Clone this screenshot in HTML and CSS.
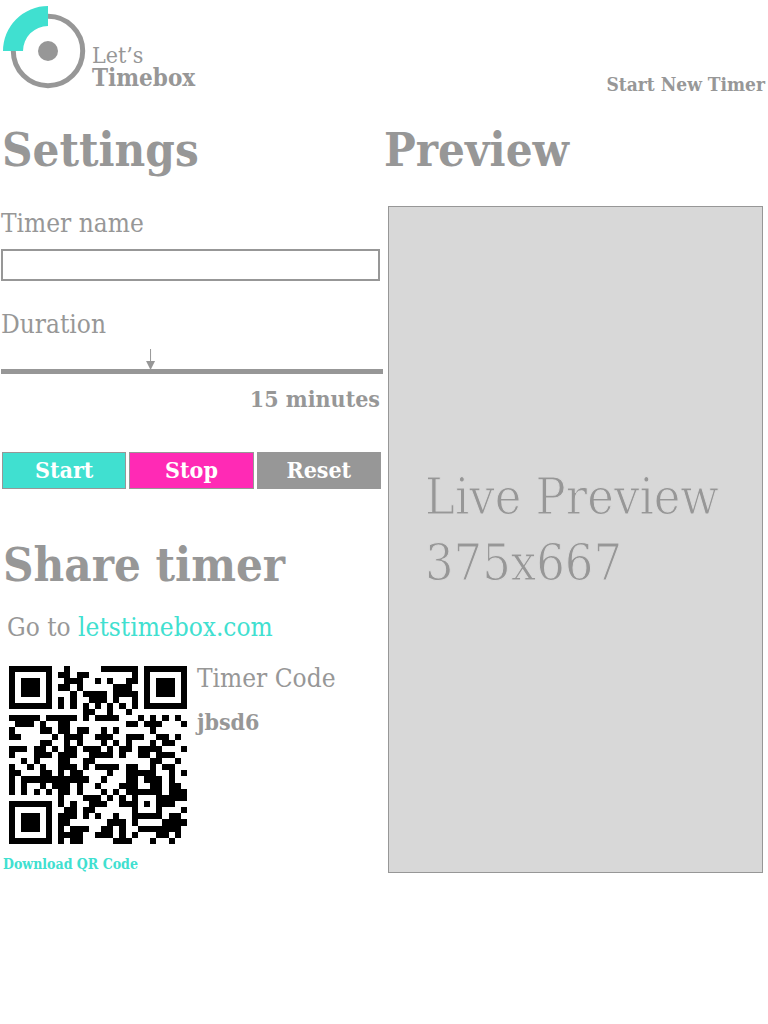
FILE: index.html
```
<!DOCTYPE html>
<html lang="en">
<head>
<meta charset="utf-8">
<meta name="viewport" content="width=device-width, initial-scale=1">
<title>Let's Timebox</title>
<link rel="stylesheet" href="styles.css">
</head>
<body>
<header class="header">
  <a class="brand" href="#">
    <svg class="logo" viewBox="0 0 86 90" aria-hidden="true">
      <circle cx="48" cy="51" r="34.7" fill="none" stroke="#979797" stroke-width="5"/>
      <circle cx="48" cy="51" r="10" fill="#979797"/>
      <path d="M3 51A45 45 0 0 1 48 6V26A25 25 0 0 0 23 51Z" fill="#40e0d0"/>
    </svg>
    <span class="brand-name"><span class="brand-light">Let’s</span><span class="brand-bold">Timebox</span></span>
  </a>
  <a class="new-timer" href="#">Start New Timer</a>
</header>
<main class="columns">
  <div class="controls">
    <section class="settings">
      <h1 class="title">Settings</h1>
      <label class="label" for="name">Timer name</label>
      <input class="text-box" id="name" type="text">
      <label class="label label-duration" for="duration">Duration</label>
      <input class="slider" id="duration" type="range" min="1" max="37" value="15">
      <output class="duration" for="duration">15 minutes</output>
      <div class="actions">
        <button class="button start" type="button">Start</button>
        <button class="button stop" type="button">Stop</button>
        <button class="button reset" type="button">Reset</button>
      </div>
    </section>
    <section class="share">
      <h2 class="title">Share timer</h2>
      <p class="go">Go to <a class="link" href="#">letstimebox.com</a></p>
      <div class="code-row">
        <svg class="qr" viewBox="0 0 29 29" role="img" aria-label="QR code">
          <g id="finder"><path d="M0 0h7v7h-7zM1 1v5h5v-5z" fill-rule="evenodd"/><path d="M2 2h3v3h-3z"/></g>
          <use href="#finder" x="22"/><use href="#finder" y="22"/>
          <path transform="translate(0 .5)" stroke="#000" d="M9 0h1M15 0h6
M8 1h2M11 1h2M20 1h1
M9 2h3M14 2h1M16 2h1M19 2h2
M8 3h2M11 3h1M17 3h3
M10 4h1M12 4h4M17 4h4
M8 5h1M10 5h1M13 5h3M17 5h1M20 5h1
M8 6h1M10 6h1M12 6h1M14 6h1M16 6h1M18 6h1M20 6h1
M12 7h2M16 7h1M19 7h1
M0 8h5M6 8h5M12 8h1M14 8h4M21 8h1M23 8h1M25 8h1M27 8h1
M1 9h3M5 9h1M8 9h2M19 9h2M22 9h3M28 9h1
M0 10h1M5 10h2M8 10h2M11 10h2M15 10h1M17 10h1M23 10h1
M0 11h2M7 11h1M9 11h3M14 11h3M19 11h3M24 11h2M27 11h1
M5 12h2M9 12h1M11 12h1M15 12h1M17 12h1M19 12h1M23 12h1M25 12h2
M0 13h3M4 13h2M7 13h1M9 13h2M12 13h3M16 13h1M18 13h2M21 13h4M28 13h1
M0 14h1M4 14h3M8 14h3M13 14h4M18 14h1M21 14h2M24 14h3
M2 15h1M4 15h1M8 15h2M12 15h2M23 15h2M27 15h1
M0 16h1M3 16h1M5 16h1M8 16h3M12 16h1M14 16h4M19 16h2M23 16h1M25 16h2
M0 17h2M5 17h2M8 17h1M10 17h2M16 17h1M19 17h5M26 17h1M28 17h1
M0 18h1M2 18h11M15 18h1M19 18h2M22 18h3M26 18h1
M0 19h1M2 19h1M5 19h1M7 19h3M11 19h1M14 19h1M18 19h3M23 19h2M26 19h2
M0 20h1M2 20h1M4 20h1M6 20h1M8 20h2M11 20h1M15 20h1M17 20h1M19 20h6M26 20h3
M8 21h1M12 21h3M16 21h1M18 21h1M20 21h1M24 21h5
M8 22h1M10 22h1M13 22h3M18 22h3M22 22h1M24 22h3
M9 23h2M12 23h2M20 23h1M24 23h1M28 23h1
M8 24h3M12 24h1M14 24h1M17 24h1M20 24h5M26 24h2
M8 25h2M16 25h3M20 25h1M25 25h4
M8 26h1M10 26h3M15 26h2M18 26h1M21 26h7
M8 27h4M14 27h3M18 27h1M20 27h1M24 27h2M27 27h1
M8 28h1M10 28h2M17 28h3M23 28h1M26 28h1"/>
        </svg>
        <dl class="code">
          <dt>Timer Code</dt>
          <dd>jbsd6</dd>
        </dl>
      </div>
      <a class="download" href="#">Download QR Code</a>
    </section>
  </div>
  <section class="preview">
    <h2 class="title title-preview">Preview</h2>
    <div class="screen"><p>Live Preview<br>375x667</p></div>
  </section>
</main>
</body>
</html>
```
FILE: styles.css
```
* { box-sizing: border-box; }
body {
  margin: 0;
  background: #fff;
  color: #979797;
  font-family: "Roboto Slab", "DejaVu Serif Condensed", "DejaVu Serif", serif;
  font-size: 26px;
  font-weight: 300;
  line-height: 32px;
}
a { color: inherit; text-decoration: none; }
p, h1, h2, dl, dd { margin: 0; }

.header { display: flex; justify-content: space-between; align-items: flex-end; padding-right: 3px; }
.brand { display: flex; align-items: flex-end; gap: 6px; }
.logo { display: block; width: 86px; height: 90px; }
.brand-name { display: flex; flex-direction: column; line-height: 24px; }
.brand-light { font-size: 23px; line-height: 22px; }
.brand-bold { font-size: 24px; font-weight: 700; }
.new-timer { font-size: 19px; font-weight: 700; line-height: 24px; margin-bottom: -6px; }

.columns { display: grid; grid-template-columns: 1fr 1fr; }
.controls { padding-top: 28px; }
.title { padding-left: 3px; font-size: 47px; font-weight: 700; line-height: 64px; }
.settings { display: flex; flex-direction: column; padding-left: 1px; }
.settings .title { padding-left: 1px; }
.label { margin-top: 25px; }
.text-box {
  height: 32px;
  margin: 10px 4px 0 0;
  padding: 0 8px;
  border: 2px solid #979797;
  border-radius: 0;
  background: #fff;
  color: inherit;
  font: inherit;
}
.label-duration { margin-top: 27px; }

.slider {
  appearance: none;
  width: auto;
  height: 25px;
  margin: 9px 1px 0 0;
  background: linear-gradient(#979797, #979797) bottom / 100% 5px no-repeat;
}
.slider::-webkit-slider-runnable-track { height: 25px; }
.slider::-webkit-slider-thumb {
  appearance: none;
  width: 9px;
  height: 20px;
  background: #979797;
  clip-path: polygon(4px 0, 5px 0, 5px 12px, 9px 12px, 5px 20px, 4px 20px, 0 12px, 4px 12px);
}
.duration { margin-top: 9px; padding-right: 4px; font-size: 23px; font-weight: 700; text-align: right; }

.actions { display: flex; gap: 3px; margin-top: 37px; padding: 0 3px 0 1px; }
.button {
  flex: 1;
  height: 37px;
  padding: 0 0 2px;
  border: 1px solid #979797;
  color: #fff;
  font: inherit;
  font-size: 23px;
  font-weight: 700;
}
.start { background: #40e0d0; }
.stop { background: #ff2ab5; }
.reset { background: #979797; }

.share { margin-top: 44px; }
.go { padding: 14px 0 0 7px; }
.link, .download { color: #40e0d0; }
.code-row { display: flex; gap: 10px; padding: 23px 0 0 9px; }
.qr { width: 178px; height: 178px; shape-rendering: crispEdges; }
.code { display: grid; gap: 12px; align-content: start; margin-top: -4px; }
.code dd { font-size: 23px; font-weight: 700; }
.download { display: block; padding: 8px 0 0 3px; font-size: 14px; font-weight: 700; line-height: 24px; }

.preview { padding: 28px 5px 0 4px; }
.title-preview { padding-left: 0; margin-left: -4px; }
.screen {
  display: flex;
  align-items: center;
  aspect-ratio: 375 / 667;
  margin-top: 24px;
  padding: 0 36px;
  border: 1px solid #979797;
  background: #d8d8d8;
}
.screen p {
  padding-bottom: 20px;
  font-size: 50px;
  font-weight: 100;
  line-height: 66px;
  white-space: nowrap;
  -webkit-text-stroke: 1px #d8d8d8;
}
```
